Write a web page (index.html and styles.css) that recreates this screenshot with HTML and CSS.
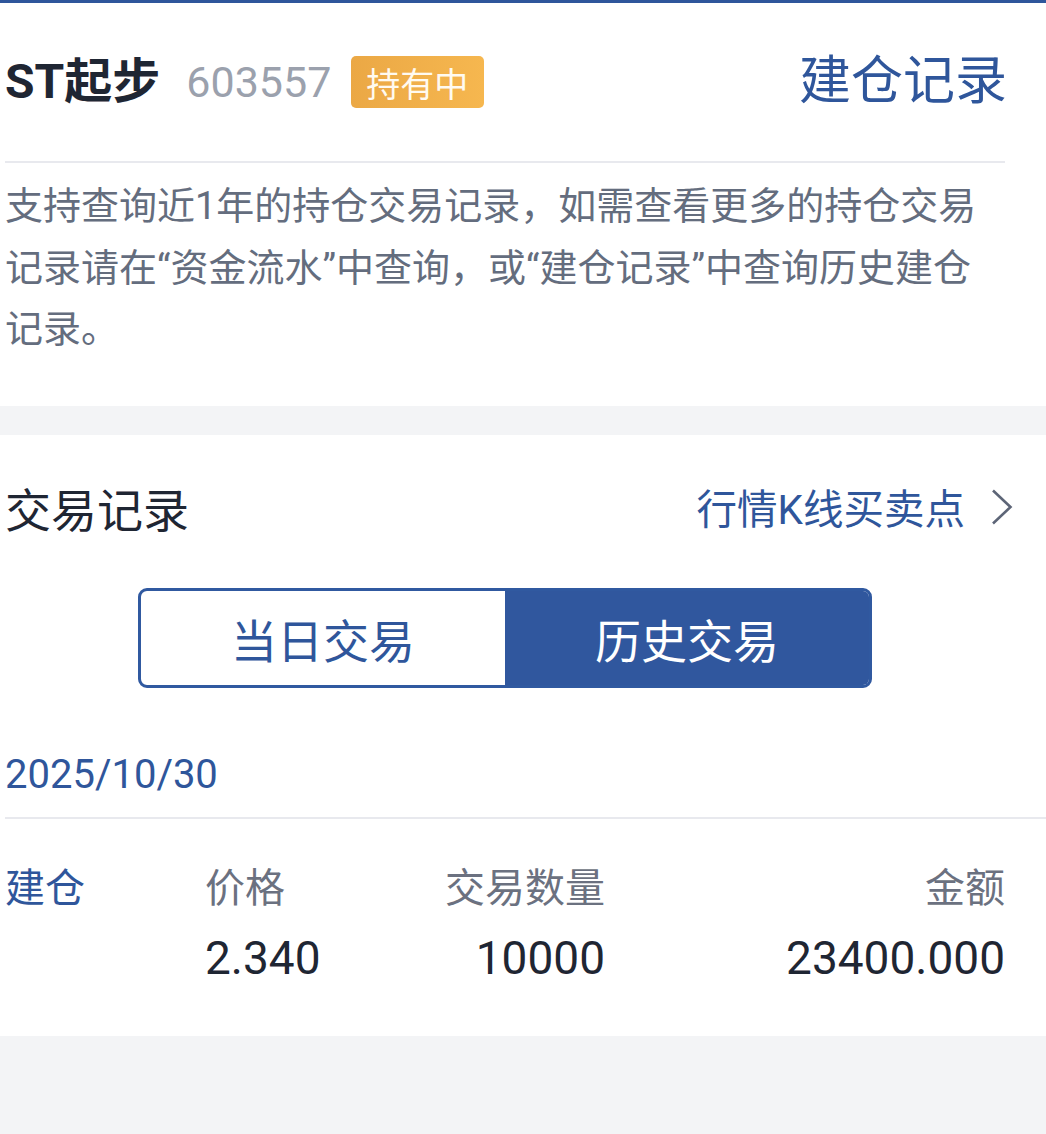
FILE: index.html
```html
<!DOCTYPE html>
<html lang="zh-CN">
<head>
<meta charset="utf-8">
<title>交易记录</title>
<link rel="stylesheet" href="styles.css">
</head>
<body>
<div class="page">
  <section class="card card-top">
    <div class="head">
      <div class="head-left">
        <span class="stock-name">ST起步</span>
        <span class="stock-code">603557</span>
        <span class="badge">持有中</span>
      </div>
      <a class="head-link">建仓记录</a>
    </div>
    <div class="divider"></div>
    <p class="note">支持查询近1年的持仓交易记录，如需查看更多的持仓交易记录请在“资金流水”中查询，或“建仓记录”中查询历史建仓记录。</p>
  </section>
  <div class="gap"></div>
  <section class="card card-trades">
    <div class="title-row">
      <h2 class="title">交易记录</h2>
      <a class="kline-link">行情K线买卖点<svg class="chev" width="22" height="36" viewBox="0 0 22 36"><path d="M2 1.5 L19.5 18 L2 34.5" fill="none" stroke="#5d6577" stroke-width="2.6" stroke-linejoin="miter"/></svg></a>
    </div>
    <div class="seg">
      <div class="seg-item">当日交易</div>
      <div class="seg-item seg-active">历史交易</div>
    </div>
    <div class="date">2025/10/30</div>
    <div class="divider divider-wide"></div>
    <div class="trade">
      <div class="t-type">建仓</div>
      <div class="t-label">价格</div>
      <div class="t-label t-right">交易数量</div>
      <div class="t-label t-right">金额</div>
      <div></div>
      <div class="t-val">2.340</div>
      <div class="t-val t-right">10000</div>
      <div class="t-val t-right">23400.000</div>
    </div>
  </section>
</div>
</body>
</html>
```

FILE: styles.css
```css
* { box-sizing: border-box; }
html, body { margin: 0; padding: 0; }
body {
  background: #f3f4f6;
  font-family: Roboto, "Noto Sans CJK SC", sans-serif;
  color: #1f2633;
}
.page { width: 1046px; }
.card {
  background: #ffffff;
  padding: 0 41px 0 5px;
}
.card-top {
  border-top: 3px solid #2f569b;
  padding-bottom: 45px;
}
.head {
  height: 158px;
  display: flex;
  align-items: center;
  justify-content: space-between;
}
.head-left { display: flex; align-items: center; }
.stock-name {
  font-size: 48px;
  font-weight: 700;
  color: #1f2633;
  line-height: 1;
}
.stock-code {
  font-size: 43px;
  color: #9ba1ad;
  margin-left: 26px;
  line-height: 1;
}
.badge {
  margin-left: 20px;
  height: 52px;
  padding: 0 16px 0 15px;
  display: flex;
  align-items: center;
  font-size: 34px;
  color: #fffaf0;
  background: linear-gradient(90deg, #eba845, #f6b74f);
  border-radius: 5px;
}
.head-link {
  font-size: 52px;
  color: #2f569b;
  line-height: 1;
  margin-right: -2px;
}
.divider { height: 2px; background: #e8e9ee; }
.note {
  margin: 13px 0 0;
  font-size: 38px;
  line-height: 61.5px;
  color: #646d7e;
}
.gap { height: 29px; }
.card-trades { padding-top: 45px; padding-bottom: 50px; }
.title-row {
  display: flex;
  align-items: center;
  justify-content: space-between;
  height: 54px;
}
.title {
  margin: 0;
  font-size: 46px;
  font-weight: 400;
  color: #1f2633;
}
.kline-link {
  display: flex;
  align-items: center;
  font-size: 40.5px;
  color: #2f569b;
  margin-right: -8px;
}
.chev { margin-left: 26px; }
.seg {
  margin: 54px auto 0;
  width: 734px;
  height: 100px;
  display: flex;
  border: 3px solid #3059a0;
  border-radius: 9px;
  overflow: hidden;
}
.seg-item {
  flex: 1;
  display: flex;
  align-items: center;
  justify-content: center;
  font-size: 46px;
  color: #2f569b;
}
.seg-active { background: #30579e; color: #ffffff; }
.date {
  margin-top: 63px;
  font-size: 40px;
  line-height: 48px;
  color: #2f569b;
}
.divider-wide { margin-top: 18px; margin-right: -41px; }
.trade {
  margin-top: 46px;
  display: grid;
  grid-template-columns: 200px 200px 200px 400px;
  row-gap: 18px;
}
.t-type { font-size: 40px; line-height: 48px; color: #2f569b; }
.t-label { font-size: 40px; line-height: 48px; color: #6b7180; }
.t-val { font-size: 46px; line-height: 55px; color: #1f2633; }
.t-right { text-align: right; }
```
